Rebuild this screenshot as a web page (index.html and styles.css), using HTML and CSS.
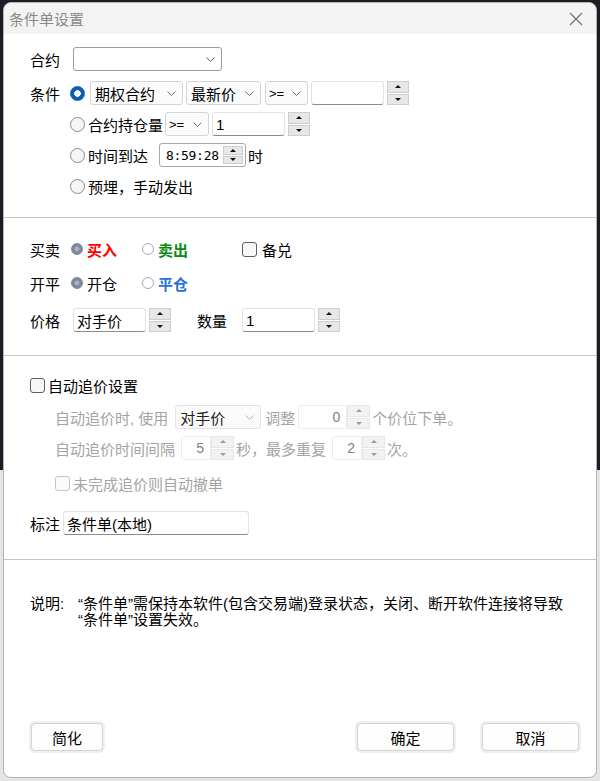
FILE: index.html
```html
<!DOCTYPE html>
<html lang="zh-CN">
<head>
  <meta charset="UTF-8">
  <title>条件单设置</title>
  <link rel="stylesheet" href="styles.css">
</head>
<body>
<div class="window">
  <div class="titlebar">
    <span class="title">条件单设置</span>
    <svg class="close" width="14" height="14" viewBox="0 0 14 14"><path d="M1 1L13 13M13 1L1 13" stroke="#707070" stroke-width="1.1"/></svg>
  </div>

  <!-- 合约 / 条件 -->
  <section class="sec sec-cond">
    <div class="row row-first">
      <span class="lbl lbl-wide">合约</span>
      <div class="combo combo-main combo-contract"><span></span><svg class="chev" width="9" height="5" viewBox="0 0 9 5"><path d="M0.5 0.5L4.5 4.5L8.5 0.5" fill="none" stroke="#606060"/></svg></div>
    </div>
    <div class="row">
      <span class="lbl">条件</span>
      <span class="radio on"></span>
      <div class="combo combo-type"><span>期权合约</span><svg class="chev" width="9" height="5" viewBox="0 0 9 5"><path d="M0.5 0.5L4.5 4.5L8.5 0.5" fill="none" stroke="#707070"/></svg></div>
      <div class="combo combo-price"><span>最新价</span><svg class="chev" width="9" height="5" viewBox="0 0 9 5"><path d="M0.5 0.5L4.5 4.5L8.5 0.5" fill="none" stroke="#707070"/></svg></div>
      <div class="combo combo-op"><span>&gt;=</span><svg class="chev" width="9" height="5" viewBox="0 0 9 5"><path d="M0.5 0.5L4.5 4.5L8.5 0.5" fill="none" stroke="#707070"/></svg></div>
      <div class="field field-num"></div>
      <div class="spin"><i class="up"></i><i class="dn"></i></div>
    </div>
    <div class="row indent">
      <span class="radio"></span>
      <span class="opt-text">合约持仓量</span>
      <div class="combo combo-op combo-pos"><span>&gt;=</span><svg class="chev" width="9" height="5" viewBox="0 0 9 5"><path d="M0.5 0.5L4.5 4.5L8.5 0.5" fill="none" stroke="#707070"/></svg></div>
      <div class="field field-num field-pos">1</div>
      <div class="spin"><i class="up"></i><i class="dn"></i></div>
    </div>
    <div class="row indent">
      <span class="radio"></span>
      <span class="opt-text">时间到达</span>
      <div class="timebox">
        <span class="time">8:59:28</span>
        <div class="spin spin-time"><i class="up"></i><i class="dn"></i></div>
      </div>
      <span class="unit">时</span>
    </div>
    <div class="row indent">
      <span class="radio"></span>
      <span class="opt-text">预埋，手动发出</span>
    </div>
  </section>

  <!-- 买卖 / 开平 / 价格 -->
  <section class="sec sec-order">
    <div class="row">
      <span class="lbl">买卖</span>
      <span class="choice"><span class="radio sm on"></span><b class="buy">买入</b></span>
      <span class="choice choice-last"><span class="radio sm"></span><b class="sell">卖出</b></span>
      <span class="check"></span><span class="check-text">备兑</span>
    </div>
    <div class="row">
      <span class="lbl">开平</span>
      <span class="choice"><span class="radio sm on"></span><span>开仓</span></span>
      <span class="choice"><span class="radio sm"></span><b class="close-pos">平仓</b></span>
    </div>
    <div class="row row-price">
      <span class="lbl lbl-wide">价格</span>
      <div class="field field-num">对手价</div>
      <div class="spin"><i class="up"></i><i class="dn"></i></div>
      <span class="lbl-qty">数量</span>
      <div class="field field-num">1</div>
      <div class="spin"><i class="up"></i><i class="dn"></i></div>
    </div>
  </section>

  <!-- 自动追价 -->
  <section class="sec sec-chase">
    <div class="row">
      <span class="check"></span><span class="check-text tight">自动追价设置</span>
    </div>
    <div class="row sub off r2">
      <span>自动追价时, 使用</span>
      <div class="combo combo-chase"><span>对手价</span><svg class="chev" width="9" height="5" viewBox="0 0 9 5"><path d="M0.5 0.5L4.5 4.5L8.5 0.5" fill="none" stroke="#b0b0b0"/></svg></div>
      <span class="tx">调整</span>
      <div class="field field-off field-adj">0</div>
      <div class="spin spin-off"><i class="up"></i><i class="dn"></i></div>
      <span class="tx">个价位下单。</span>
    </div>
    <div class="row sub off r3">
      <span>自动追价时间间隔</span>
      <div class="field field-off field-small">5</div>
      <div class="spin spin-off"><i class="up"></i><i class="dn"></i></div>
      <span class="tx">秒，最多重复</span>
      <div class="field field-off field-small">2</div>
      <div class="spin spin-off"><i class="up"></i><i class="dn"></i></div>
      <span class="tx">次。</span>
    </div>
    <div class="row sub off r4">
      <span class="check check-off"></span><span class="check-text tight">未完成追价则自动撤单</span>
    </div>
    <div class="row r5">
      <span class="lbl lbl-note">标注</span>
      <div class="field field-note">条件单(本地)</div>
    </div>
  </section>

  <section class="sec-info">
    <div class="note">
      <span class="note-lbl">说明:</span>
      <p>“条件单”需保持本软件(包含交易端)登录状态，关闭、断开软件连接将导致<br>“条件单”设置失效。</p>
    </div>
  </section>

  <div class="footer">
    <button class="btn btn-small">简化</button>
    <span class="spacer"></span>
    <button class="btn">确定</button>
    <button class="btn">取消</button>
  </div>
</div>
</body>
</html>
```

FILE: styles.css
```css
* {
  box-sizing: border-box;
}
body {
  margin: 0;
  height: 781px;
  overflow: hidden;
  font-family: "Liberation Sans", "Noto Sans CJK SC", sans-serif;
  font-size: 15px;
  color: #000;
  background: linear-gradient(to bottom, #1d1b24 0, #1d1b24 470px, #e4e4e4 470px);
}
.window {
  margin: 2px 0 0 3px;
  width: 594px;
  height: 776px;
  background: #fff;
  border: 1px solid #b4b4b4;
  border-radius: 8px;
  overflow: hidden;
  display: flex;
  flex-direction: column;
}
.titlebar {
  flex: none;
  height: 31px;
  background: #f3f3f3;
  display: flex;
  align-items: center;
  justify-content: space-between;
  padding: 0 13px 0 5px;
}
.title {
  color: #8a8a8a;
}

/* sections */
.sec {
  flex: none;
  border-bottom: 1px solid #c6c6c6;
  padding-left: 26px;
  display: flex;
  flex-direction: column;
}
.sec-cond {
  padding-top: 13px;
  padding-bottom: 19px;
  gap: 7px;
}
.sec-cond .row-first {
  margin-bottom: 3px;
}
.sec-order {
  padding-top: 19px;
  padding-bottom: 23px;
  gap: 10px;
}
.sec-order .row-price {
  margin-top: 3px;
}
.sec-chase {
  padding-top: 17px;
  padding-bottom: 24px;
}
.sec-chase .r2 { margin-top: 8px; }
.sec-chase .r3 { margin-top: 7px; }
.sec-chase .r4 { margin-top: 11px; }
.sec-chase .r5 { margin-top: 16px; }

.row {
  display: flex;
  align-items: center;
  height: 24px;
  white-space: nowrap;
}
.lbl {
  width: 40px;
  flex: none;
}
.lbl-wide {
  width: 43px;
}
.lbl-note {
  width: 33px;
}
.indent {
  padding-left: 40px;
}

/* radios / checks */
.radio {
  flex: none;
  width: 15px;
  height: 15px;
  border-radius: 50%;
  border: 1px solid #8a8a8a;
  background: #f6f6f6;
}
.radio.on {
  border-color: #0a5fb4;
  background: radial-gradient(circle, #fff 0, #fff 3px, #0a5fb4 3.6px);
}
.radio.sm {
  width: 12px;
  height: 12px;
  margin-left: 1px;
  border-color: #a3abb8;
  background: #fff;
}
.radio.sm.on {
  border-color: #7d899a;
  background: radial-gradient(circle, #aab3bf 0, #aab3bf 2px, #7d899a 2.8px);
}
.opt-text {
  margin-left: 3px;
}
.choice {
  display: flex;
  align-items: center;
  width: 71px;
  flex: none;
}
.choice-last {
  width: 101px;
}
.choice .radio + * {
  margin-left: 4px;
}
.buy { color: #f00; }
.sell { color: #0a8a12; }
.close-pos { color: #2a6fd6; }
b { font-weight: 700; }

.check {
  flex: none;
  width: 15px;
  height: 15px;
  border: 1px solid #5e5e5e;
  border-radius: 3px;
  background: #f7f7f7;
}
.check-off {
  border-color: #c4c4c4;
  background: #fbfbfb;
}
.check-text {
  margin-left: 5px;
}
.check-text.tight {
  margin-left: 3px;
}

/* combo boxes */
.combo {
  flex: none;
  display: flex;
  align-items: center;
  justify-content: space-between;
  height: 24px;
  padding: 0 6px 0 4px;
  border: 1px solid #d4d4d4;
  border-radius: 3px;
  background: #fbfbfb;
}
.combo-main {
  border-color: #9c9c9c;
  background: #fff;
}
.combo-contract { width: 149px; }
.combo-type { width: 93px; margin-left: 5px; margin-right: 3px; }
.combo-price { width: 75px; margin-right: 4px; }
.combo-op { width: 43px; margin-right: 3px; padding-left: 3px; font-size: 13px; }
.combo-pos { width: 44px; margin-left: 2px; }
.combo-chase {
  width: 86px;
  margin-left: 7px;
  margin-right: 2px;
  border-color: #e2e2e2;
  color: #222;
}

/* text fields */
.field {
  flex: none;
  display: flex;
  align-items: center;
  height: 24px;
  padding: 0 3px;
  border: 1px solid #e2e2e2;
  border-bottom-color: #8c8c8c;
  border-radius: 3px;
  background: #fff;
}
.field-num {
  width: 73px;
  margin-right: 3px;
}
.field-note {
  width: 186px;
}
.field-off {
  justify-content: flex-end;
  padding-right: 6px;
  border-color: #ececec;
  color: #808080;
  font-size: 14px;
}
.field-adj {
  width: 49px;
  margin-left: 3px;
}
.field-small {
  width: 30px;
  margin-left: 6px;
}
.off {
  color: #a4a4a4;
}
.sub {
  padding-left: 25px;
}
.tx {
  margin-left: 2px;
}
.lbl-qty {
  margin-left: 26px;
  width: 45px;
}

/* spinner */
.spin {
  flex: none;
  width: 22px;
  height: 24px;
  display: flex;
  flex-direction: column;
  gap: 1px;
  background: #fff;
}
.spin i {
  flex: 1;
  display: flex;
  align-items: center;
  justify-content: center;
  border: 1px solid #cdcdcd;
  background: #e7e7e7;
}
.spin i::after {
  content: "";
  border-left: 3.5px solid transparent;
  border-right: 3.5px solid transparent;
  border-bottom: 3.5px solid #111;
}
.spin i.dn::after {
  border-bottom: 0;
  border-top: 3.5px solid #111;
}
.spin-off {
  width: 23px;
}
.spin-off i {
  border-color: #e6e6e6;
  background: #f2f2f2;
}
.spin-off i::after {
  border-bottom-color: #9a9a9a;
}
.spin-off i.dn::after {
  border-top-color: #9a9a9a;
}

/* time picker */
.timebox {
  flex: none;
  width: 87px;
  height: 24px;
  margin-left: 11px;
  margin-right: 2px;
  display: flex;
  align-items: center;
  justify-content: space-between;
  padding: 0 2px 0 6px;
  border: 1px solid #a8a8a8;
  border-radius: 3px;
}
.time {
  font-family: "DejaVu Sans Mono", monospace;
  font-size: 13px;
  letter-spacing: -0.3px;
}
.spin-time {
  width: 20px;
  height: 18px;
}

/* notes */
.sec-info {
  flex: 1;
  padding: 36px 0 0 26px;
}
.note {
  display: flex;
  font-size: 15px;
  line-height: 16px;
}
.note-lbl {
  width: 48px;
  flex: none;
}
.note p {
  margin: 0;
  white-space: nowrap;
}

/* buttons */
.footer {
  flex: none;
  display: flex;
  align-items: center;
  padding: 0 17px 26px 27px;
  gap: 28px;
}
.spacer {
  flex: 1;
}
.btn {
  width: 97px;
  height: 28px;
  font-family: inherit;
  font-size: 15px;
  color: #000;
  background: #fdfdfd;
  border: 1px solid #d3d3d3;
  border-radius: 4px;
  box-shadow: 0 0 0 2px #efefef;
  padding: 0;
}
.btn-small {
  width: 72px;
}
```
